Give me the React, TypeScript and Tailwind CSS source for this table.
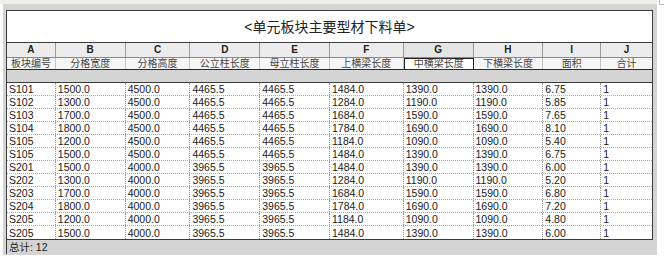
const cols = [
  { key: 'A', label: '板块编号', w: 'w-[49px]' },
  { key: 'B', label: '分格宽度', w: 'w-[70px]' },
  { key: 'C', label: '分格高度', w: 'w-[65px]' },
  { key: 'D', label: '公立柱长度', w: 'w-[70px]' },
  { key: 'E', label: '母立柱长度', w: 'w-[70px]' },
  { key: 'F', label: '上横梁长度', w: 'w-[74px]' },
  { key: 'G', label: '中横梁长度', w: 'w-[70px]' },
  { key: 'H', label: '下横梁长度', w: 'w-[70px]' },
  { key: 'I', label: '面积', w: 'w-[58px]' },
  { key: 'J', label: '合计', w: 'w-[51px]' },
];

const rows = [
  ['S101', '1500.0', '4500.0', '4465.5', '4465.5', '1484.0', '1390.0', '1390.0', '6.75', '1'],
  ['S102', '1300.0', '4500.0', '4465.5', '4465.5', '1284.0', '1190.0', '1190.0', '5.85', '1'],
  ['S103', '1700.0', '4500.0', '4465.5', '4465.5', '1684.0', '1590.0', '1590.0', '7.65', '1'],
  ['S104', '1800.0', '4500.0', '4465.5', '4465.5', '1784.0', '1690.0', '1690.0', '8.10', '1'],
  ['S105', '1200.0', '4500.0', '4465.5', '4465.5', '1184.0', '1090.0', '1090.0', '5.40', '1'],
  ['S105', '1500.0', '4500.0', '4465.5', '4465.5', '1484.0', '1390.0', '1390.0', '6.75', '1'],
  ['S201', '1500.0', '4000.0', '3965.5', '3965.5', '1484.0', '1390.0', '1390.0', '6.00', '1'],
  ['S202', '1300.0', '4000.0', '3965.5', '3965.5', '1284.0', '1190.0', '1190.0', '5.20', '1'],
  ['S203', '1700.0', '4000.0', '3965.5', '3965.5', '1684.0', '1590.0', '1590.0', '6.80', '1'],
  ['S204', '1800.0', '4000.0', '3965.5', '3965.5', '1784.0', '1690.0', '1690.0', '7.20', '1'],
  ['S205', '1200.0', '4000.0', '3965.5', '3965.5', '1184.0', '1090.0', '1090.0', '4.80', '1'],
  ['S205', '1500.0', '4000.0', '3965.5', '3965.5', '1484.0', '1390.0', '1390.0', '6.00', '1'],
];

const font = { fontFamily: '"Liberation Sans", "Noto Sans CJK SC", sans-serif' };

export default function App() {
  return (
    <div className="relative h-[261px] w-[664px] overflow-hidden bg-white text-black" style={font}>
      <div className="h-[4px] w-[657px] bg-[#eef0e8]" />
      <div className="ml-[3px] w-[654px] bg-[#d4d4d4] pb-[1px] pl-[3px] pr-[4px] pt-[6px]">
        <div className="w-[647px] border-l border-r border-[#3c3c3c]">
          {/* title */}
          <div className="flex h-[33px] items-center justify-center border-b border-t border-[#3c3c3c] bg-white text-[14px] leading-none text-[#222]">
            &lt;单元板块主要型材下料单&gt;
          </div>

          {/* column letters */}
          <div className="flex h-[15px] border-b border-[#8a8a8a] bg-[#ececec]">
            {cols.map((c, i) => (
              <div
                key={c.key}
                className={`${c.w} flex items-center justify-center text-[10px] font-bold leading-none text-[#222] ${
                  i < cols.length - 1 ? 'border-r border-[#9a9a9a]' : ''
                } ${c.key === 'G' ? 'bg-[#e4e4e4]' : ''}`}
              >
                {c.key}
              </div>
            ))}
          </div>

          {/* chinese headers */}
          <div className="flex h-[12px] border-b border-[#2a2a2a] bg-[#f6f6f6]">
            {cols.map((c, i) => (
              <div
                key={c.key}
                className={`${c.w} flex items-end justify-center text-[10px] leading-[11px] text-[#444] ${
                  c.key === 'G'
                    ? 'border border-b-0 border-[#222] bg-white'
                    : i < cols.length - 1
                      ? 'border-r border-[#c4c4c4]'
                      : ''
                }`}
              >
                {c.label}
              </div>
            ))}
          </div>

          {/* spacer band */}
          <div className="h-[12px] bg-[#d4d4d4]" />

          {/* data */}
          <div className="border-b border-t border-[#3c3c3c] bg-white">
            {rows.map((r, ri) => (
              <div
                key={ri}
                className={`flex h-[13px] ${ri < rows.length - 1 ? 'border-b border-dotted border-[#a8a8a8]' : ''}`}
              >
                {r.map((v, ci) => (
                  <div
                    key={ci}
                    className={`${cols[ci].w} flex items-center pl-[2px] pt-[1px] text-[10.5px] leading-none text-[#1a1a1a] ${
                      ci < r.length - 1 ? 'border-r border-dotted border-[#9a9a9a]' : ''
                    }`}
                  >
                    {v}
                  </div>
                ))}
              </div>
            ))}
          </div>
        </div>

        {/* total */}
        <div className="flex h-[14px] w-[647px] items-center border-l border-[#3c3c3c] pl-[2px] text-[10.5px] leading-none text-[#1a1a1a]">
          总计: 12
        </div>
      </div>

      {/* corner mark */}
      <div className="absolute right-0 top-0 h-[5px] w-[5px] border-b border-l border-[#bbbbbb]" />
    </div>
  );
}
